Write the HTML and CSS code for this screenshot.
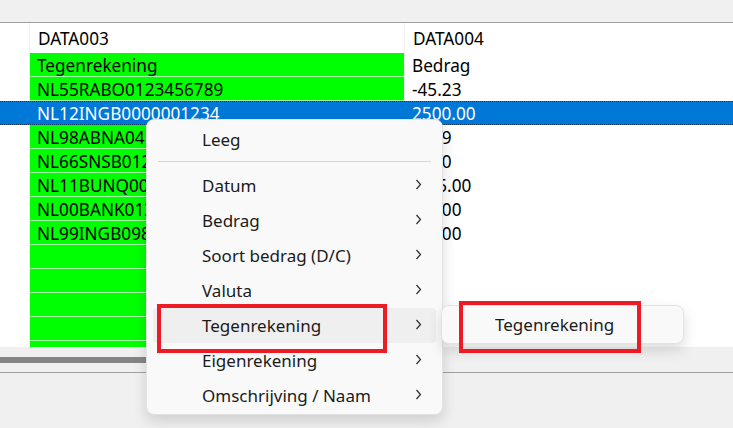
FILE: index.html
```html
<!DOCTYPE html>
<html>
<head>
  <title>Kolommen koppelen</title>
  <meta name="viewport" content="width=device-width, initial-scale=1.0">
  <link rel="stylesheet" href="styles.css">
</head>
<body>
  <div class="window">
    <div class="toolbar"></div>

    <div class="grid">
      <div class="row row-header">
        <div class="rowhead"></div>
        <div class="cell col1">DATA003</div>
        <div class="cell col2">DATA004</div>
      </div>
      <div class="row">
        <div class="rowhead"></div>
        <div class="cell col1 mapped">Tegenrekening</div>
        <div class="cell col2">Bedrag</div>
      </div>
      <div class="row">
        <div class="rowhead"></div>
        <div class="cell col1 mapped">NL55RABO0123456789</div>
        <div class="cell col2">-45.23</div>
      </div>
      <div class="row selected">
        <div class="rowhead"></div>
        <div class="cell col1">NL12INGB0000001234</div>
        <div class="cell col2">2500.00</div>
      </div>
      <div class="row">
        <div class="rowhead"></div>
        <div class="cell col1 mapped">NL98ABNA0417164300</div>
        <div class="cell col2">-8.99</div>
      </div>
      <div class="row">
        <div class="rowhead"></div>
        <div class="cell col1 mapped">NL66SNSB0123456789</div>
        <div class="cell col2">-9.50</div>
      </div>
      <div class="row">
        <div class="rowhead"></div>
        <div class="cell col1 mapped">NL11BUNQ0012345678</div>
        <div class="cell col2">-175.00</div>
      </div>
      <div class="row">
        <div class="rowhead"></div>
        <div class="cell col1 mapped">NL00BANK0123456789</div>
        <div class="cell col2">-60.00</div>
      </div>
      <div class="row">
        <div class="rowhead"></div>
        <div class="cell col1 mapped">NL99INGB0987654321</div>
        <div class="cell col2">-80.00</div>
      </div>
      <div class="row"><div class="rowhead"></div><div class="cell col1 mapped"></div><div class="cell col2"></div></div>
      <div class="row"><div class="rowhead"></div><div class="cell col1 mapped"></div><div class="cell col2"></div></div>
      <div class="row"><div class="rowhead"></div><div class="cell col1 mapped"></div><div class="cell col2"></div></div>
      <div class="row"><div class="rowhead"></div><div class="cell col1 mapped"></div><div class="cell col2"></div></div>
      <div class="row"><div class="rowhead"></div><div class="cell col1 mapped"></div><div class="cell col2"></div></div>
    </div>

    <div class="hscroll">
      <div class="hscroll-thumb"></div>
    </div>
    <div class="statusbar"></div>

    <!-- context menu -->
    <div class="menu">
      <div class="menu-item">Leeg</div>
      <div class="menu-sep"></div>
      <div class="menu-item">Datum <svg class="chev" width="7" height="11" viewBox="0 0 7 11"><path d="M1.5 1l4 4.5-4 4.5"/></svg></div>
      <div class="menu-item">Bedrag <svg class="chev" width="7" height="11" viewBox="0 0 7 11"><path d="M1.5 1l4 4.5-4 4.5"/></svg></div>
      <div class="menu-item">Soort bedrag (D/C) <svg class="chev" width="7" height="11" viewBox="0 0 7 11"><path d="M1.5 1l4 4.5-4 4.5"/></svg></div>
      <div class="menu-item">Valuta <svg class="chev" width="7" height="11" viewBox="0 0 7 11"><path d="M1.5 1l4 4.5-4 4.5"/></svg></div>
      <div class="menu-item active">Tegenrekening <svg class="chev" width="7" height="11" viewBox="0 0 7 11"><path d="M1.5 1l4 4.5-4 4.5"/></svg></div>
      <div class="menu-item">Eigenrekening <svg class="chev" width="7" height="11" viewBox="0 0 7 11"><path d="M1.5 1l4 4.5-4 4.5"/></svg></div>
      <div class="menu-item">Omschrijving / Naam <svg class="chev" width="7" height="11" viewBox="0 0 7 11"><path d="M1.5 1l4 4.5-4 4.5"/></svg></div>
    </div>

    <div class="submenu">
      <div class="menu-item">Tegenrekening</div>
    </div>

    <!-- annotations -->
    <div class="mark mark-main"></div>
    <div class="mark mark-sub"></div>
  </div>
</body>
</html>
```

FILE: styles.css
```css
* {
  margin: 0;
  padding: 0;
  box-sizing: border-box;
}

body {
  font-family: 'Noto Sans', 'Open Sans', sans-serif;
  background: #f0f0f0;
  color: #000;
}

.window {
  position: relative;
  width: 733px;
  height: 428px;
  overflow: hidden;
  background: #f0f0f0;
}

.toolbar {
  height: 23px;
  background: #f0f0f0;
  border-bottom: 1px solid #a0a0a0;
}

.grid {
  height: 324px;
  background: #fff;
  overflow: hidden;
}

.row {
  display: flex;
  height: 24px;
  font-size: 17.2px;
  line-height: 25px;
}

.row-header {
  height: 30px;
  line-height: 31px;
}

.rowhead {
  width: 30px;
  flex-shrink: 0;
  border-right: 1px solid #f0f0f0;
}

.cell {
  white-space: nowrap;
  overflow: hidden;
  padding-left: 7px;
}

.col1 {
  width: 375px;
  flex-shrink: 0;
  border-right: 1px solid #f0f0f0;
}

.col2 {
  flex: 1;
}

.row-header .cell {
  padding-left: 8px;
}

.mapped {
  background: #00ff00;
  border-bottom: 1px solid #a6ffa6;
}

.selected {
  background: #0078d7;
  color: #fff;
  border-top: 1px dotted #1a3d6b;
  border-bottom: 1px dotted #1a3d6b;
  line-height: 23px;
}

.selected .rowhead,
.selected .col1 {
  border-right: none;
}

.hscroll {
  height: 26px;
  padding-top: 10px;
  background: #f0f0f0;
  border-bottom: 1px solid #a0a0a0;
}

.hscroll-thumb {
  width: 300px;
  height: 6px;
  background: #858585;
}

.statusbar {
  height: 55px;
  background: #f0f0f0;
}

.menu {
  position: absolute;
  left: 146px;
  top: 119px;
  width: 297px;
  padding: 2px 6px 1px;
  background: #f9f9f9;
  border: 1px solid #e3e3e3;
  border-radius: 8px;
  box-shadow: 0 6px 14px rgba(0, 0, 0, 0.14);
  font-size: 17px;
}

.menu-item {
  display: flex;
  align-items: center;
  justify-content: space-between;
  height: 35px;
  padding: 0 14px 0 49px;
  border-radius: 4px;
  color: #1b1b1b;
  white-space: nowrap;
}

.menu-item.active {
  background: #efefef;
}

.chev {
  fill: none;
  stroke: #2b2b2b;
  stroke-width: 1.2;
  margin-top: -2px;
}

.menu-sep {
  height: 1px;
  margin: 4px 5px 6px;
  background: #d6d6d6;
}

.submenu {
  position: absolute;
  left: 441px;
  top: 305px;
  width: 243px;
  padding: 1px 6px 1px;
  background: #f9f9f9;
  border: 1px solid #e3e3e3;
  border-radius: 8px;
  box-shadow: 0 6px 14px rgba(0, 0, 0, 0.14);
  font-size: 17px;
}

.submenu .menu-item {
  padding-left: 47px;
}

.mark {
  position: absolute;
  border: 4px solid #ed1c24;
}

.mark-main {
  left: 157px;
  top: 304px;
  width: 230px;
  height: 49px;
}

.mark-sub {
  left: 459px;
  top: 301px;
  width: 182px;
  height: 52px;
}
```
